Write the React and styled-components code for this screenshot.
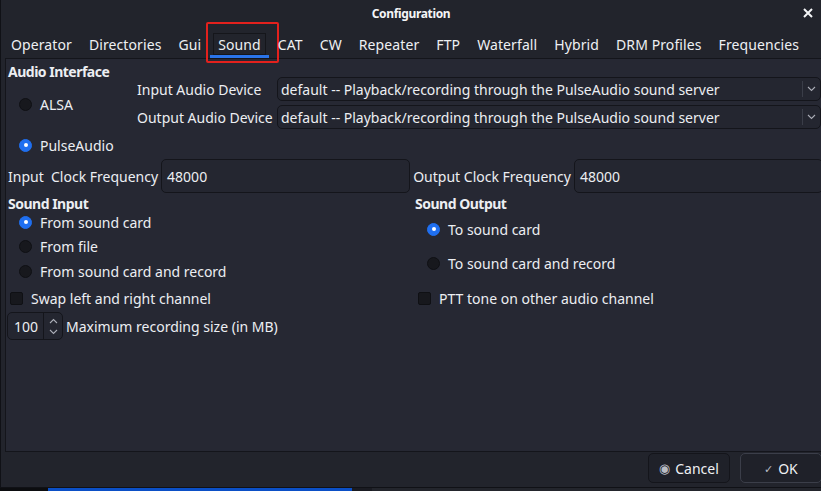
import React from 'react';
import styled, { createGlobalStyle } from 'styled-components';

const GlobalStyle = createGlobalStyle`
  html, body {
    margin: 0;
    padding: 0;
    background: #111217;
    overflow: hidden;
  }
  body {
    font-family: "Noto Sans", "Open Sans", sans-serif;
    font-size: 14px;
    color: #eceef2;
  }
`;

const Window = styled.div`
  width: 821px;
  height: 488px;
  box-sizing: border-box;
  background: #22242c;
  border-left: 1px solid #101116;
  border-bottom: 1px solid #101116;
  display: flex;
  flex-direction: column;
`;

const TitleBar = styled.div`
  height: 26px;
  flex: none;
  display: flex;
  align-items: center;
  justify-content: center;
  position: relative;
  font-size: 12px;
  font-weight: 700;
  letter-spacing: -0.35px;
  color: #f4f5f7;
`;

const CloseButton = styled.span`
  position: absolute;
  right: 4px;
  top: 4px;
  width: 18px;
  height: 18px;
  display: flex;
  align-items: center;
  justify-content: center;
`;

const TabBar = styled.div`
  height: 32px;
  flex: none;
  box-sizing: border-box;
  padding: 7px 0 0 5px;
  display: flex;
  gap: 7px;
`;

const Tab = styled.div`
  position: relative;
  height: 22px;
  box-sizing: border-box;
  padding: 0 4px;
  border: 1px solid ${(p) => (p.$active ? '#15161b' : 'transparent')};
  display: flex;
  align-items: center;
  white-space: nowrap;
  letter-spacing: 0.1px;
  color: #eef0f3;
`;

const Underline = styled.span`
  position: absolute;
  left: -4px;
  right: -4px;
  bottom: -4px;
  height: 3px;
  background: #2a74ea;
`;

const Highlight = styled.span`
  position: absolute;
  left: -8px;
  right: -14px;
  top: -12px;
  bottom: -9px;
  border: 2px solid #e3211d;
  border-radius: 2px;
  pointer-events: none;
`;

const Panel = styled.div`
  flex: 1;
  margin-left: 4px;
  margin-right: -4px;
  background: #262833;
  border: 1px solid #14151b;
  padding: 0 0 0 2px;
  display: flex;
  flex-direction: column;
  min-height: 0;
`;

const InterfaceSection = styled.div`
  height: 100px;
  display: flex;
`;

const Column = styled.div`
  width: ${(p) => p.$width || 'auto'};
  flex: ${(p) => (p.$width ? 'none' : '1')};
  display: flex;
  flex-direction: column;
`;

const Heading = styled.div`
  font-weight: 700;
  height: 16px;
  line-height: 16px;
  letter-spacing: -0.5px;
  margin-top: ${(p) => p.$mt || 0}px;
  white-space: nowrap;
`;

const OptionRow = styled.label`
  height: 20px;
  display: flex;
  align-items: center;
  gap: 8px;
  margin-top: ${(p) => p.$mt || 0}px;
  padding-left: ${(p) => p.$indent || 0}px;
  white-space: nowrap;
`;

const RadioDot = styled.span`
  width: 13px;
  height: 13px;
  box-sizing: border-box;
  border-radius: 50%;
  flex: none;
  background: ${(p) => (p.$on ? '#1f6ff0' : '#17181d')};
  border: 1px solid ${(p) => (p.$on ? '#1f6ff0' : '#0f1014')};
  display: flex;
  align-items: center;
  justify-content: center;
  &::after {
    content: '';
    width: 4px;
    height: 4px;
    border-radius: 50%;
    background: #ffffff;
    display: ${(p) => (p.$on ? 'block' : 'none')};
  }
`;

const CheckBox = styled.span`
  width: 13px;
  height: 13px;
  box-sizing: border-box;
  border-radius: 2px;
  flex: none;
  background: #17181d;
  border: 1px solid #0f1014;
`;

const DeviceGrid = styled.div`
  margin-top: 18px;
  margin-right: 3px;
  display: grid;
  grid-template-columns: 140px 1fr;
  row-gap: 4px;
  align-items: center;
`;

const Label = styled.span`
  white-space: pre;
`;

const Combo = styled.div`
  height: 24px;
  box-sizing: border-box;
  border: 1px solid #14151b;
  border-radius: 5px;
  background: #242630;
  display: flex;
  align-items: center;
  padding-left: 3px;
  white-space: nowrap;
  overflow: hidden;
`;

const ComboText = styled.span`
  flex: 1;
  overflow: hidden;
`;

const ComboArrow = styled.span`
  width: 16px;
  height: 16px;
  flex: none;
  border-left: 1px solid #3a3d48;
  display: flex;
  align-items: center;
  justify-content: center;
  margin-right: 1px;
`;

const ClockRow = styled.div`
  height: 34px;
  display: grid;
  grid-template-columns: auto 1fr auto 1fr;
  column-gap: 3px;
  align-items: center;
  margin-right: 1px;
`;

const TextField = styled.div`
  height: 34px;
  box-sizing: border-box;
  border: 1px solid #14151b;
  border-radius: 5px;
  background: #242630;
  display: flex;
  align-items: center;
  padding-left: 5px;
`;

const IoSection = styled.div`
  display: flex;
  margin-top: 3px;
`;

const SpinRow = styled.div`
  height: 28px;
  margin-top: 4px;
  display: flex;
  align-items: center;
  gap: 3px;
`;

const SpinBox = styled.div`
  width: 56px;
  height: 28px;
  margin-left: -1px;
  box-sizing: border-box;
  border: 1px solid #14151b;
  border-radius: 5px;
  background: #242630;
  display: flex;
  overflow: hidden;
`;

const SpinValue = styled.span`
  width: 35px;
  padding-left: 6px;
  box-sizing: border-box;
  overflow: hidden;
  display: flex;
  align-items: center;
  white-space: nowrap;
`;

const SpinButtons = styled.span`
  flex: 1;
  border-left: 1px solid #14151b;
  display: flex;
  flex-direction: column;
  align-items: center;
  justify-content: space-around;
  padding: 2px 0;
`;

const Footer = styled.div`
  height: 34px;
  flex: none;
  display: flex;
  justify-content: flex-end;
  align-items: flex-start;
  gap: 10px;
  padding-top: 1px;
  margin-right: -1px;
`;

const Button = styled.button`
  width: 82px;
  height: 30px;
  box-sizing: border-box;
  border-radius: 5px;
  border: 1px solid ${(p) => (p.$focused ? '#3b3e49' : '#14151b')};
  background: #1f2129;
  color: #eef0f3;
  font-family: inherit;
  font-size: 14px;
  display: flex;
  align-items: center;
  justify-content: center;
  gap: 5px;
  padding: 0;
`;

const ButtonIcon = styled.span`
  color: #b9bcc4;
  font-size: ${(p) => p.$size || 11}px;
  display: flex;
  align-items: center;
`;

const Desktop = styled.div`
  height: 3px;
  display: flex;
`;

const DesktopPart = styled.span`
  width: ${(p) => p.$w}px;
  flex: ${(p) => (p.$w ? 'none' : '1')};
  background: ${(p) => p.$bg};
`;

const Chevron = ({ up }) => (
  <svg width="9" height="6" viewBox="0 0 9 6">
    <path
      d={up ? 'M1 5 L4.5 1.5 L8 5' : 'M1 1 L4.5 4.5 L8 1'}
      fill="none"
      stroke="#a9acb5"
      strokeWidth="1.1"
    />
  </svg>
);

const tabs = ['Operator', 'Directories', 'Gui', 'Sound', 'CAT', 'CW', 'Repeater', 'FTP', 'Waterfall', 'Hybrid', 'DRM Profiles', 'Frequencies'];
const deviceText = 'default -- Playback/recording through the PulseAudio sound server';

function Radio({ on, children, mt, indent }) {
  return (
    <OptionRow $mt={mt} $indent={indent}>
      <RadioDot $on={on} />
      {children}
    </OptionRow>
  );
}

function Check({ children, mt, indent }) {
  return (
    <OptionRow $mt={mt} $indent={indent}>
      <CheckBox />
      {children}
    </OptionRow>
  );
}

export default function App() {
  return (
    <>
      <GlobalStyle />
      <Window>
        <TitleBar>
          Configuration
          <CloseButton>
            <svg width="10" height="10" viewBox="0 0 10 10">
              <path d="M1 1 L9 9 M9 1 L1 9" stroke="#f4f5f7" strokeWidth="2" />
            </svg>
          </CloseButton>
        </TitleBar>
        <TabBar>
          {tabs.map((t) => (
            <Tab key={t} $active={t === 'Sound'}>
              {t}
              {t === 'Sound' && <Underline />}
              {t === 'Sound' && <Highlight />}
            </Tab>
          ))}
        </TabBar>
        <Panel>
          <InterfaceSection>
            <Column $width="129px">
              <Heading $mt={5}>Audio Interface</Heading>
              <Radio mt={14} indent={11}>ALSA</Radio>
              <Radio mt={21} indent={11} on>PulseAudio</Radio>
            </Column>
            <Column>
              <DeviceGrid>
                <Label>Input Audio Device</Label>
                <Combo>
                  <ComboText>{deviceText}</ComboText>
                  <ComboArrow><Chevron /></ComboArrow>
                </Combo>
                <Label>Output Audio Device</Label>
                <Combo>
                  <ComboText>{deviceText}</ComboText>
                  <ComboArrow><Chevron /></ComboArrow>
                </Combo>
              </DeviceGrid>
            </Column>
          </InterfaceSection>
          <ClockRow>
            <Label>{'Input  Clock Frequency'}</Label>
            <TextField>48000</TextField>
            <Label>Output Clock Frequency</Label>
            <TextField>48000</TextField>
          </ClockRow>
          <IoSection>
            <Column $width="407px">
              <Heading>Sound Input</Heading>
              <Radio on indent={11}>From sound card</Radio>
              <Radio mt={4} indent={11}>From file</Radio>
              <Radio mt={5} indent={11}>From sound card and record</Radio>
              <Check mt={7} indent={2}>Swap left and right channel</Check>
              <SpinRow>
                <SpinBox>
                  <SpinValue>100</SpinValue>
                  <SpinButtons>
                    <Chevron up />
                    <Chevron />
                  </SpinButtons>
                </SpinBox>
                Maximum recording size (in MB)
              </SpinRow>
            </Column>
            <Column>
              <Heading>Sound Output</Heading>
              <Radio mt={7} indent={12} on>To sound card</Radio>
              <Radio mt={14} indent={12}>To sound card and record</Radio>
              <Check mt={15} indent={3}>PTT tone on other audio channel</Check>
            </Column>
          </IoSection>
        </Panel>
        <Footer>
          <Button>
            <ButtonIcon $size={13}>◉</ButtonIcon>
            Cancel
          </Button>
          <Button $focused>
            <ButtonIcon>✓</ButtonIcon>
            OK
          </Button>
        </Footer>
      </Window>
      <Desktop>
        <DesktopPart $w={48} $bg="#0c0d10" />
        <DesktopPart $w={304} $bg="#0b4fc6" />
        <DesktopPart $w={20} $bg="#1a1b22" />
        <DesktopPart $bg="#23252c" />
      </Desktop>
    </>
  );
}
